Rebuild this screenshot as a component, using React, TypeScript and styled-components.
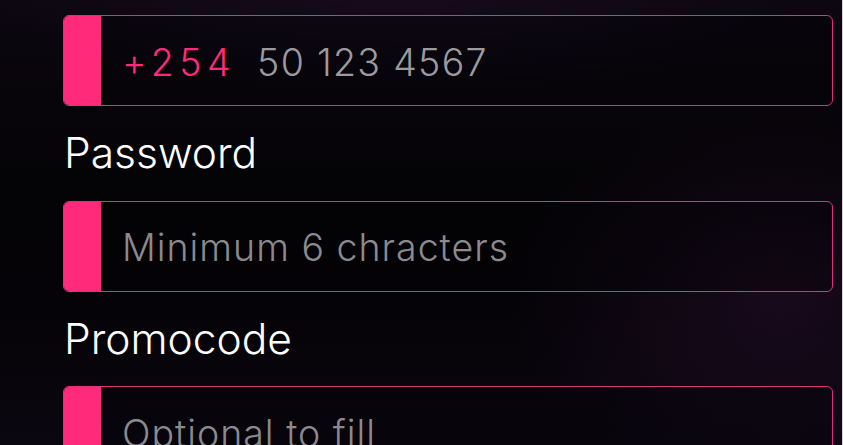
import React from 'react'
import styled, { createGlobalStyle } from 'styled-components'

const GlobalStyle = createGlobalStyle`
  html, body {
    margin: 0;
    padding: 0;
    height: 100%;
    overflow: hidden;
  }
  body {
    background: #050307;
    font-family: Inter, "Noto Sans", sans-serif;
  }
`

const Page = styled.div`
  width: 843px;
  height: 445px;
  box-sizing: border-box;
  padding: 15px 9px 0 63px;
  border-right: 1px solid #d6d4da;
  overflow: hidden;
  background:
    radial-gradient(ellipse 360px 260px at 780px 300px, rgba(40, 16, 46, 0.55), transparent 75%),
    radial-gradient(ellipse 520px 140px at 400px -20px, rgba(28, 14, 36, 0.7), transparent 80%),
    linear-gradient(180deg, #0c0710 0%, #040305 40%, #050307 70%, #0b0710 100%);
  display: flex;
  flex-direction: column;
`

const Field = styled.div`
  display: flex;
  flex-direction: column;
`

const Label = styled.div`
  color: #ffffff;
  font-size: 42.5px;
  font-weight: 300;
  line-height: 94.5px;
  height: 94.5px;
  margin-left: 1px;
`

const InputBox = styled.div`
  height: 91px;
  box-sizing: border-box;
  border: 1px solid #dc3276;
  border-radius: 6px;
  display: flex;
  align-items: center;
  overflow: hidden;
  background: rgba(4, 2, 6, 0.35);
`

const Marker = styled.div`
  width: 38px;
  align-self: stretch;
  margin: -1px 0 -1px -1px;
  background: #ff2a7a;
  border-radius: 6px 0 0 6px;
`

const Value = styled.div<{ $muted?: boolean }>`
  padding: 3px 0 0 21px;
  font-size: 37.5px;
  font-weight: 300;
  letter-spacing: ${(p) => (p.$muted ? '1px' : '1.3px')};
  color: ${(p) => (p.$muted ? '#8b8a8f' : '#9b9a9f')};
  white-space: nowrap;
`

const Code = styled.span`
  color: #ff2a7a;
  letter-spacing: 5.5px;
  margin-right: 21px;
`

export default function App() {
  return (
    <>
      <GlobalStyle />
      <Page>
        <Field>
          <InputBox>
            <Marker />
            <Value>
              <Code>+254</Code>50 123 4567
            </Value>
          </InputBox>
        </Field>
        <Field>
          <Label>Password</Label>
          <InputBox>
            <Marker />
            <Value $muted>Minimum 6 chracters</Value>
          </InputBox>
        </Field>
        <Field>
          <Label>Promocode</Label>
          <InputBox>
            <Marker />
            <Value $muted>Optional to fill</Value>
          </InputBox>
        </Field>
      </Page>
    </>
  )
}
